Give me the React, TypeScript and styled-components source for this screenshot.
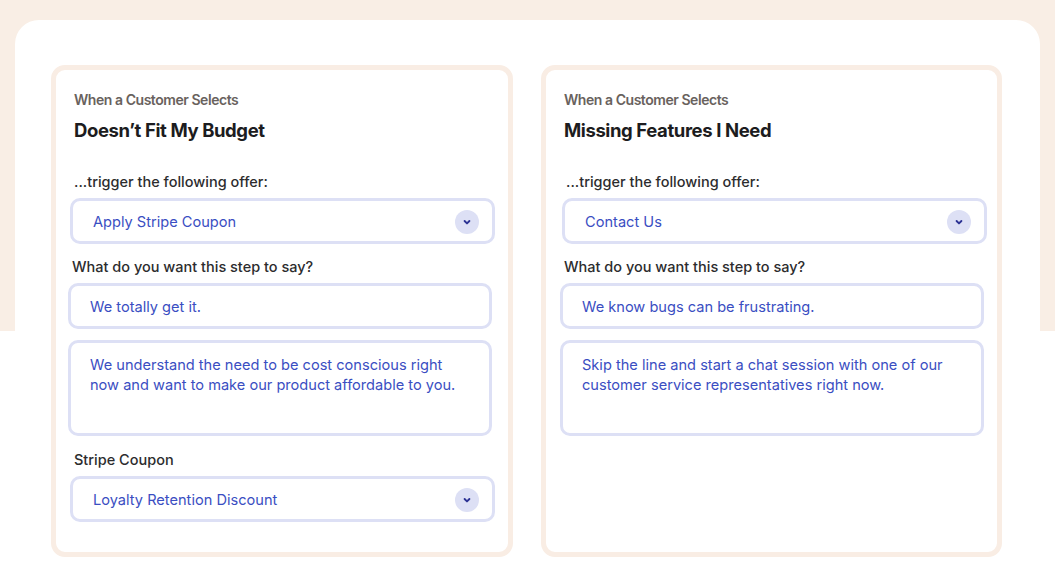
import React from 'react';
import styled, { createGlobalStyle } from 'styled-components';

const GlobalStyle = createGlobalStyle`
  html, body {
    margin: 0;
    padding: 0;
    background: #ffffff;
  }
  body {
    font-family: Inter, 'Noto Sans', sans-serif;
    -webkit-font-smoothing: antialiased;
  }
`;

const Page = styled.div`
  width: 1055px;
  height: 585px;
  overflow: hidden;
  box-sizing: border-box;
  padding: 20px 15px 0 15px;
  background: linear-gradient(to bottom, #f9eee5 0, #f9eee5 331px, #ffffff 331px);
`;

const Panel = styled.section`
  background: #ffffff;
  border-radius: 24px 24px 0 0;
  height: 100%;
  box-sizing: border-box;
  padding: 45px 38px 0 36px;
  display: grid;
  grid-template-columns: 462px 461px;
  column-gap: 28px;
  align-items: start;
`;

const Card = styled.article<{ $lead: number; $trail: number }>`
  height: 492px;
  box-sizing: border-box;
  border: 5px solid #f9ede4;
  border-radius: 14px;
  padding: 21px ${(props) => props.$trail}px 0 ${(props) => props.$lead}px;
  display: flex;
  flex-direction: column;
`;

const CardHead = styled.header<{ $shift: number }>`
  padding-left: ${(props) => props.$shift}px;
  margin-bottom: 30px;
`;

const Eyebrow = styled.div`
  font-size: 14px;
  line-height: 18px;
  font-weight: 600;
  letter-spacing: -0.45px;
  color: #69625d;
`;

const Title = styled.h2`
  margin: 9px 0 0 0;
  font-size: 18.5px;
  line-height: 24px;
  font-weight: 700;
  letter-spacing: -0.4px;
  color: #1c1c20;
`;

const Label = styled.div<{ $gap: number; $shift?: number }>`
  margin-top: ${(props) => props.$gap}px;
  margin-bottom: 6px;
  font-size: 14.5px;
  line-height: 20px;
  font-weight: 500;
  color: #2c2c2e;
  padding-left: ${(props) => props.$shift ?? 4}px;
`;

const Field = styled.div<{ $tall?: boolean }>`
  box-sizing: border-box;
  height: ${(props) => (props.$tall ? 96 : 46)}px;
  margin-right: 3px;
  border: 3px solid #dde0f5;
  border-radius: 10px;
  background: #ffffff;
  color: #3a4ec2;
  font-size: 14.6px;
  line-height: 20px;
  padding: ${(props) => (props.$tall ? '12px 24px 0 19px' : '1px 19px 0')};
  display: flex;
  align-items: ${(props) => (props.$tall ? 'flex-start' : 'center')};
`;

const TextArea = styled(Field)`
  margin-top: 11px;
`;

const SelectBox = styled(Field)`
  justify-content: space-between;
  margin: 0 0 0 2px;
  padding: 1px 13px 0 20px;
`;

const ChevronBadge = styled.span`
  width: 24px;
  height: 24px;
  border-radius: 50%;
  background: #dde0f5;
  display: flex;
  align-items: center;
  justify-content: center;
`;

const Chevron = () => (
  <svg width="10" height="10" viewBox="0 0 10 10" fill="none">
    <path d="M2.6 4 L5 6.4 L7.4 4" stroke="#2c3294" strokeWidth="1.9" strokeLinecap="round" strokeLinejoin="round" />
  </svg>
);

function Select({ value }: { value: string }) {
  return (
    <SelectBox>
      <span>{value}</span>
      <ChevronBadge>
        <Chevron />
      </ChevronBadge>
    </SelectBox>
  );
}

interface IOfferRule {
  reason: string;
  offer: string;
  headline: string;
  body: string;
  coupon?: string;
}

const rules: IOfferRule[] = [
  {
    reason: 'Doesn’t Fit My Budget',
    offer: 'Apply Stripe Coupon',
    headline: 'We totally get it.',
    body: 'We understand the need to be cost conscious right now and want to make our product affordable to you.',
    coupon: 'Loyalty Retention Discount',
  },
  {
    reason: 'Missing Features I Need',
    offer: 'Contact Us',
    headline: 'We know bugs can be frustrating.',
    body: 'Skip the line and start a chat session with one of our customer service representatives right now.',
  },
];

function RuleCard({ rule, lead, trail, headShift }: { rule: IOfferRule; lead: number; trail: number; headShift: number }) {
  return (
    <Card $lead={lead} $trail={trail}>
      <CardHead $shift={headShift}>
        <Eyebrow>When a Customer Selects</Eyebrow>
        <Title>{rule.reason}</Title>
      </CardHead>
      <Label $gap={0} $shift={6}>...trigger the following offer:</Label>
      <Select value={rule.offer} />
      <Label $gap={13} $shift={4}>What do you want this step to say?</Label>
      <Field>{rule.headline}</Field>
      <TextArea $tall>{rule.body}</TextArea>
      {rule.coupon && (
        <>
          <Label $gap={14} $shift={6}>Stripe Coupon</Label>
          <Select value={rule.coupon} />
        </>
      )}
    </Card>
  );
}

export default function App() {
  return (
    <>
      <GlobalStyle />
      <Page>
        <Panel>
          <RuleCard rule={rules[0]} lead={12} trail={13} headShift={6} />
          <RuleCard rule={rules[1]} lead={14} trail={10} headShift={4} />
        </Panel>
      </Page>
    </>
  );
}
